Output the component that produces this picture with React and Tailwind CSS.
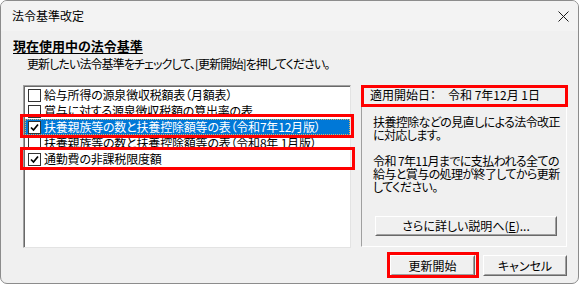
import React from "react";

function Check({ checked }) {
  return (
    <span className="w-[13px] h-[13px] border border-[#333333] bg-white flex items-center justify-center shrink-0">
      {checked && (
        <svg width="9" height="9" viewBox="0 0 9 9">
          <path d="M1 4.5 L3.5 7 L8 1.5" stroke="#000" strokeWidth="1.7" fill="none" />
        </svg>
      )}
    </span>
  );
}

function Row({ checked, selected, children }) {
  return (
    <div
      className={
        selected
          ? "h-[16px] flex items-center pl-[2px] bg-[#0078d7] text-white border border-dotted border-[#d9b36a]"
          : "h-[16px] flex items-center pl-[2px] border border-transparent"
      }
    >
      <Check checked={checked} />
      <span className="ml-[3px] whitespace-nowrap tracking-[-0.2px]">{children}</span>
    </div>
  );
}

function Btn({ className, children }) {
  return (
    <div className={"border border-t-white border-l-white border-r-[#696969] border-b-[#696969] bg-[#f0f0f0] " + className}>
      <div className="w-full h-full border border-t-[#f0f0f0] border-l-[#f0f0f0] border-r-[#a0a0a0] border-b-[#a0a0a0] flex items-center justify-center">
        {children}
      </div>
    </div>
  );
}

export default function App() {
  return (
    <div className="relative w-[579px] h-[284px] bg-[#f0f0f0] border border-[#8c8c8c] rounded-[7px] overflow-hidden font-['Noto_Sans_CJK_JP',sans-serif] [font-feature-settings:'palt'] text-[12px] leading-[12px] text-black">
      {/* title bar */}
      <div className="h-[30px] bg-[#f3f3f3] flex items-center justify-between pl-[11px] pr-[9px]">
        <span>法令基準改定</span>
        <svg width="11" height="11" viewBox="0 0 11 11">
          <path d="M0.5 0.5 L10.5 10.5 M10.5 0.5 L0.5 10.5" stroke="#1a1a1a" strokeWidth="1" fill="none" />
        </svg>
      </div>

      {/* body */}
      <div className="pt-[8px]">
        <div className="pl-[12px] text-[13px] leading-[13px] font-bold underline underline-offset-[2px]">
          現在使用中の法令基準
        </div>
        <div className="pl-[26px] mt-[6px] whitespace-nowrap tracking-[-0.9px]">
          更新したい法令基準をチェックして、[更新開始]を押してください。
        </div>

        <div className="flex mt-[15px] pl-[22px] pr-[11px] gap-[10px]">
          {/* list box */}
          <div className="w-[328px] h-[163px] border border-t-[#a0a0a0] border-l-[#a0a0a0] border-r-[#e3e3e3] border-b-[#e3e3e3]">
            <div className="w-full h-full bg-white border-t border-l border-t-[#696969] border-l-[#696969]">
              <Row>給与所得の源泉徴収税額表（月額表）</Row>
              <Row>賞与に対する源泉徴収税額の算出率の表</Row>
              <Row checked selected>扶養親族等の数と扶養控除額等の表（令和7年12月版）</Row>
              <Row>扶養親族等の数と扶養控除額等の表（令和8年 1月版）</Row>
              <Row checked>通勤費の非課税限度額</Row>
            </div>
          </div>

          {/* right panel */}
          <div className="w-[206px] h-[162px] border border-t-[#a0a0a0] border-l-[#a0a0a0] border-r-white border-b-white flex flex-col">
            <div className="pt-[3px] pl-[8px] flex whitespace-nowrap">
              <span>適用開始日：</span>
              <span className="ml-[12px]">令和 7年12月 1日</span>
            </div>
            <div className="pl-[11px] mt-[14px] leading-[13px] whitespace-nowrap tracking-[-0.6px]">
              扶養控除などの見直しによる法令改正
              <br />
              に対応します。
              <br />
              <br />
              令和 7年11月までに支払われる全ての
              <br />
              給与と賞与の処理が終了してから更新
              <br />
              してください。
            </div>
            <div className="mt-auto mb-[10px] pl-[13px]">
              <Btn className="w-[182px] h-[20px]">
                <span className="whitespace-nowrap">
                  さらに詳しい説明へ(<span className="underline">E</span>)...
                </span>
              </Btn>
            </div>
          </div>
        </div>

        {/* bottom buttons */}
        <div className="flex justify-end gap-[8px] pr-[11px] mt-[7px]">
          <Btn className="w-[85px] h-[21px]">更新開始</Btn>
          <Btn className="w-[84px] h-[21px]">キャンセル</Btn>
        </div>
      </div>

      {/* red annotation boxes */}
      <div className="absolute left-[19px] top-[113px] w-[334px] h-[24px] border-[3px] border-[#ff0000]" />
      <div className="absolute left-[19px] top-[146px] w-[335px] h-[23px] border-[3px] border-[#ff0000]" />
      <div className="absolute left-[360px] top-[84px] w-[207px] h-[22px] border-[3px] border-[#ff0000]" />
      <div className="absolute left-[386px] top-[251px] w-[92px] h-[26px] border-[3px] border-[#ff0000]" />
    </div>
  );
}
